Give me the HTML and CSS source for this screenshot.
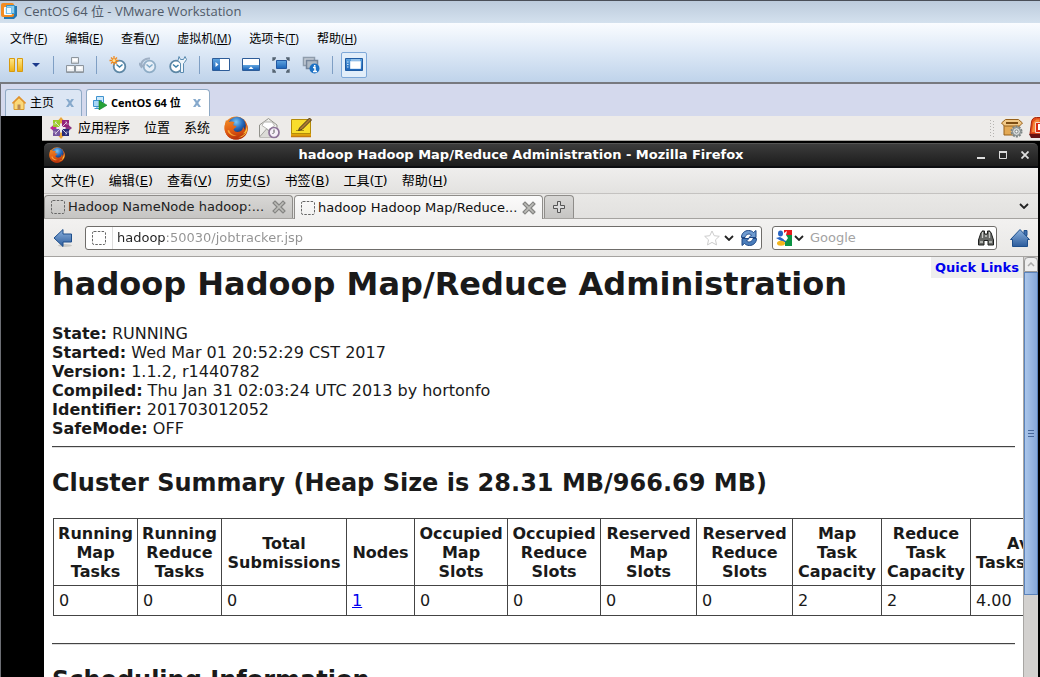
FILE: index.html
```html
<!DOCTYPE html>
<html lang="zh-CN">
<head>
<meta charset="utf-8">
<title>CentOS 64 位 - VMware Workstation</title>
<link rel="stylesheet" href="styles.css">
</head>
<body>
<svg class="defs" aria-hidden="true">
  <defs>
    <radialGradient id="globe" cx=".45" cy=".3" r=".7"><stop offset="0" stop-color="#7cc8f4"/><stop offset=".5" stop-color="#2a6fc0"/><stop offset="1" stop-color="#0d2a6b"/></radialGradient>
    <linearGradient id="fox" x1="0" y1="0" x2=".3" y2="1"><stop offset="0" stop-color="#f08a24"/><stop offset=".6" stop-color="#e05a12"/><stop offset="1" stop-color="#b8340c"/></linearGradient>
    <linearGradient id="gold" x1="0" y1="0" x2="0" y2="1"><stop offset="0" stop-color="#ffe88a"/><stop offset="1" stop-color="#eeb010"/></linearGradient>
    <linearGradient id="azure" x1="0" y1="0" x2="0" y2="1"><stop offset="0" stop-color="#5fa4e0"/><stop offset="1" stop-color="#1a63b8"/></linearGradient>
    <linearGradient id="steel" x1="0" y1="0" x2="0" y2="1"><stop offset="0" stop-color="#8cb2de"/><stop offset="1" stop-color="#2c5c9c"/></linearGradient>
    <symbol id="firefox" viewBox="0 0 24 24">
      <circle cx="12" cy="12" r="11.500" fill="url(#fox)"/>
      <circle cx="13" cy="9.500" r="8.800" fill="url(#globe)"/>
      <path d="M2 4c1 1 2 2 3.500 2 2-.8 4-.4 5 .4-1 .8-1.500 2-1 3l3 .6c-.4 2-2.500 2.200-3 3.500 1 2.500 4 3 6.500 2 2-.8 3-2.500 3-4.500 1.500 1 2 3 1.500 4.500 2-2 2.500-5 1.500-8 1.500 1.500 2 4 1.700 6.500C23 19.500 18.500 23.500 12 23.500 5 23.500 .5 18 .6 12 .7 9 1.200 6.500 2 4z" fill="url(#fox)"/>
      <path d="M22.500 9c.3 3-.8 6.500-3.500 8.500 1-.2 2-.8 2.800-1.500-1.500 3-4.500 4.800-7.800 5.200 5 .6 9-3.500 9.200-8z" fill="#fbc63c"/>
      <path d="M5 14c1 3.500 4 5.500 8 5.300-4 1.500-8.500-.8-9.500-4.800z" fill="#f8a838"/>
    </symbol>
    <symbol id="blank-page" viewBox="0 0 14 14"><rect x=".5" y=".5" width="13" height="13" rx="1.500" fill="none" stroke="#666" stroke-dasharray="2.500 1.300"/></symbol>
    <symbol id="tab-close" viewBox="0 0 14 14"><path d="M3 3l8 8M11 3l-8 8" stroke="#858583" stroke-width="4" stroke-linecap="square"/><path d="M3 3l8 8M11 3l-8 8" stroke="#bdbdb9" stroke-width="1.600" stroke-linecap="square"/></symbol>
    <symbol id="clock" viewBox="0 0 18 18"><circle cx="10.500" cy="10.500" r="5.800" fill="#fff" stroke="#5d87a5" stroke-width="1.800"/><path d="M7.500 8.500l3 2.500 3-2.500" fill="none" stroke="#3b7fa8" stroke-width="1.500"/></symbol>
    <symbol id="vm-close" viewBox="0 0 8 8"><path d="M0 0h2.500l1.500 2 1.500-2h2.500l-2.700 4 2.700 4h-2.500l-1.500-2-1.500 2h-2.500l2.700-4z" fill="#86a9cc"/></symbol>
    <symbol id="chevron" viewBox="0 0 10 6"><path d="M1 1l4 4 4-4" fill="none" stroke="#222" stroke-width="1.800"/></symbol>
  </defs>
</svg>

<header class="vm-title">
  <svg class="i16" viewBox="0 0 16 16"><path d="M3 3h13v10l-3 3h-10z" fill="#2677b0"/><rect x="0" y="0" width="13" height="14" rx="2" fill="#f28c22"/><path d="M3.500 4.500h7v7h-7z" fill="#dff1fb" stroke="#fff"/><path d="M5.500 2.500h8v8h-8z" fill="#8fcdee" stroke="#3395cc"/><path d="M5.500 4.500h5v6h-5z" fill="#eef8fd" stroke="#76bfe6"/></svg>
  <span>CentOS 64 位 - VMware Workstation</span>
</header>

<div class="vm-bars">
  <nav class="vm-menu">
    <button>文件(<u>F</u>)</button><button>编辑(<u>E</u>)</button><button>查看(<u>V</u>)</button><button>虚拟机(<u>M</u>)</button><button>选项卡(<u>T</u>)</button><button>帮助(<u>H</u>)</button>
  </nav>
  <div class="vm-tools">
    <div class="split">
      <button aria-label="暂停"><svg class="i18" viewBox="0 0 18 18"><path d="M2.500 2.500h5v13h-5zM10.500 2.500h5v13h-5z" fill="url(#gold)" stroke="#d79a10"/></svg></button>
      <button aria-label="电源选项"><svg class="caret" viewBox="0 0 10 6"><path d="M1 1h8l-4 4z" fill="#1c3a8c"/></svg></button>
    </div>
    <i class="rule"></i>
    <button aria-label="Ctrl+Alt+Del"><svg class="i18" viewBox="0 0 18 18"><g fill="#eef0f2" stroke="#8d959d"><path d="M5.500 1.500h7v6h-7zM.5 9.500h8v7h-8zM9.500 9.500h8v7h-8z"/></g><path d="M7 4h4M2.500 12h4M11.500 12h4" stroke="#fff" fill="none" stroke-width="2"/><path d="M6 7h6M1 15.500h7M10 15.500h7" stroke="#a8afb6"/></svg></button>
    <i class="rule"></i>
    <button aria-label="拍摄快照"><svg class="i18" viewBox="0 0 18 18"><use href="#clock"/><path d="M5 0v9M.5 4.500h9M2 1.500l6 6M8 1.500l-6 6" stroke="#f08a1e" stroke-width="1.300"/><circle cx="5" cy="4.500" r="1.500" fill="#ffe49a"/></svg></button>
    <button aria-label="恢复快照"><svg class="i18 dim" viewBox="0 0 18 18"><use href="#clock"/><path d="M2 10c0-5 4-8 9-7.500M0 7l2.500 4 3.500-3" fill="none" stroke="#7488a0" stroke-width="2"/></svg></button>
    <button aria-label="快照管理器"><svg class="i18" viewBox="0 0 18 18"><circle cx="7" cy="10.500" r="5.800" fill="#fff" stroke="#5d87a5" stroke-width="1.800"/><path d="M4 8.500l3 2.500 2.500-2" fill="none" stroke="#3b7fa8" stroke-width="1.500"/><path d="M10 .5l1.500 3h3l1.500-3 1.500 3-2 3-1 1v9h-3v-9l-2.500-3z" fill="#eef5fa" stroke="#5b8bb0"/></svg></button>
    <i class="rule"></i>
    <button aria-label="显示库"><svg class="i18" viewBox="0 0 18 14"><path d="M.5 .5h17v12h-17z" fill="#fff" stroke="#2d5c98"/><path d="M1 1h7v11h-7z" fill="url(#azure)"/><path d="M3.500 4l3 2.500-3 2.500z" fill="#fff"/></svg></button>
    <button aria-label="显示缩略图栏"><svg class="i18" viewBox="0 0 18 14"><path d="M.5 .5h17v12h-17z" fill="#fff" stroke="#2d5c98"/><path d="M1 7h16v5h-16z" fill="url(#azure)"/><path d="M6.500 11l2.500-2.500 2.500 2.500z" fill="#fff"/></svg></button>
    <button aria-label="全屏"><svg class="i18" viewBox="0 0 18 18"><path d="M4.500 4.500h10v8h-10z" fill="url(#azure)" stroke="#2257a0"/><path d="M1 5v-3h3M14 2h3v3M17 13v3h-3M4 16h-3v-3M1 2l2 2M17 2l-2 2M17 16l-2-2M1 16l2-2" fill="none" stroke="#536270" stroke-width="1.300"/></svg></button>
    <button aria-label="Unity"><svg class="i18" viewBox="0 0 18 18"><path d="M1.500 1.500h11v8h-11z" fill="#c5cdd6" stroke="#8f9dac" stroke-width="1.500"/><path d="M4.500 4.500h11v8h-11z" fill="#aeb9c5" stroke="#75859a" stroke-width="1.500"/><circle cx="12.500" cy="12.500" r="5" fill="#1d71c4"/><path d="M12.700 9v1.500M11 11.500h2v4M11 15.500h4" stroke="#fff" stroke-width="1.500" fill="none"/></svg></button>
    <i class="rule"></i>
    <button class="pressed" aria-label="控制台视图"><svg class="i18" viewBox="0 0 18 14"><path d="M.5 .5h17v12h-17z" fill="url(#azure)" stroke="#1f5ba2"/><path d="M5.500 3.500h10v7h-10z" fill="#fff" stroke="#d8e8f7"/><path d="M2 4h1.500M2 6.500h1.500M2 9h1.500M6 2h9" stroke="#cfe4f7"/></svg></button>
  </div>
</div>

<div class="vm-tabs" role="tablist">
  <div class="vm-tab" role="tab">
    <svg class="i14" viewBox="0 0 14 14"><path d="M2 6v7.500h10v-7.500l-5-4.500z" fill="#fbd878" stroke="#d99a2c"/><path d="M.5 7.500l6.500-6.500 6.500 6.500" fill="none" stroke="#e0922c" stroke-width="1.600"/><path d="M5.500 8.500h3v5h-3z" fill="#b98a55"/></svg>
    <span>主页</span>
    <button class="vm-x" aria-label="关闭"><svg viewBox="0 0 8 8"><use href="#vm-close"/></svg></button>
  </div>
  <div class="vm-tab current" role="tab" aria-selected="true">
    <svg class="i14" viewBox="0 0 14 14"><path d="M3.500 .5h7v6h-7z" fill="#cfe9fb" stroke="#3f93cf"/><path d="M.5 4.500h8v6h-8z" fill="#a8d6f5" stroke="#3f93cf"/><path d="M1.500 12.500h5M4 10.500v2" stroke="#3f93cf"/><path d="M6 4.500l8 4.700-8 4.700z" fill="#27a336" stroke="#12812a" stroke-width=".6"/></svg>
    <span>CentOS 64 位</span>
    <button class="vm-x" aria-label="关闭"><svg viewBox="0 0 8 8"><use href="#vm-close"/></svg></button>
  </div>
</div>

<main class="guest">
  <div class="desktop">
    <div class="panel">
      <svg class="i22" viewBox="0 0 22 22"><path d="M11 0l3 3.500-3 3.500-3-3.500z" fill="#e9a63a"/><path d="M22 11l-3.500 3-3.500-3 3.500-3z" fill="#8a3580"/><path d="M11 22l-3-3.500 3-3.500 3 3.500z" fill="#e9a63a"/><path d="M0 11l3.500-3 3.500 3-3.500 3z" fill="#c02c92"/><path d="M3 3h7v7h-7z" fill="#9ccd2a"/><path d="M12 3h7v7h-7z" fill="#932279"/><path d="M3 12h7v7h-7z" fill="#76559e"/><path d="M12 12h7v7h-7z" fill="#282b77"/><path d="M5 5l12 12M17 5l-12 12" stroke="#f5eef5" stroke-width=".8"/><path d="M6 4v3h-3M16 4v3h3M6 18v-3h-3M16 18v-3h3" stroke="#e8dff0" fill="none" stroke-width=".5"/></svg>
      <button>应用程序</button><button>位置</button><button>系统</button>
      <div class="launchers">
        <button aria-label="Firefox"><svg class="i24" viewBox="0 0 24 24"><use href="#firefox"/></svg></button>
        <button aria-label="Evolution"><svg class="i22" viewBox="0 0 22 22"><path d="M1.500 8l9-6.500 8.500 6.500v12h-17.500z" fill="#eeeeea" stroke="#92928c"/><path d="M4 8.500l2-3.500h8l2.500 3.500-6 4.500z" fill="#fff" stroke="#b5b5b0"/><path d="M1.500 20l7-8 10 8" fill="#dcdcd7" stroke="#a5a5a0"/><circle cx="16" cy="15.500" r="5" fill="#f5f0f8" stroke="#8d7399" stroke-width="1.700"/><path d="M16 12.500v3l-1.500 1.500" stroke="#555" fill="none"/></svg></button>
        <button aria-label="便笺"><svg class="i22" viewBox="0 0 22 22"><path d="M1 3h20v17h-20z" fill="#e0a40a"/><path d="M1.500 2.500h19v14h-19z" fill="#f8dd2c" stroke="#b48b08"/><path d="M1 19.500h20" stroke="#c57910" stroke-width="1.500"/><path d="M6 13.500h8" stroke="#a88c18"/><path d="M9.500 11l10-10 2 2-9.500 9.500-3.500 1z" fill="#a87932" stroke="#4c3a1c"/></svg></button>
      </div>
      <div class="tray">
        <svg class="grip" viewBox="0 0 5 17"><path d="M.5 0v17M3.500 1v16" stroke="#b5b3b0" stroke-dasharray="1 2"/></svg>
        <svg class="i22" viewBox="0 0 22 22"><path d="M3 8h15v10h-15z" fill="#e3a955" stroke="#97601a"/><path d="M3 8l2-4h12l2 4z" fill="#9c651d"/><path d="M.5 6l4-3.500h13l4 3.500-3 3h-15z" fill="#f1c886" stroke="#97601a"/><path d="M5 5h12v2h-12z" fill="#7c4c12"/><circle cx="15.500" cy="14.500" r="5" fill="#c4c9c9" stroke="#7d8585" stroke-width="2" stroke-dasharray="2 1.140"/><circle cx="15.500" cy="14.500" r="4" fill="#d5d8d8" stroke="#7d8585"/><circle cx="15.500" cy="14.500" r="1.500" fill="#fff" stroke="#7d8585"/></svg>
        <svg class="alert" viewBox="0 0 11 22"><path d="M1 17l1.500-12c.5-3 2-4.500 5-4.500h8v17z" fill="#e5501b" stroke="#a8230b"/><path d="M3 15l1.500-10 3-2.500h3v12.500z" fill="#f48a3e"/><path d="M6.500 5.500h5v10h-5z" fill="#d82b12" stroke="#f8d8c8"/><path d="M9 7h2v6h-2z" fill="#fff"/><path d="M0 17h11v4h-9z" fill="#611"/></svg>
      </div>
    </div>

    <section class="window">
      <div class="ff-title">
        <svg class="i16" viewBox="0 0 24 24"><use href="#firefox"/></svg>
        <h1>hadoop Hadoop Map/Reduce Administration - Mozilla Firefox</h1>
        <div class="controls">
          <button aria-label="最小化"><svg viewBox="0 0 8 8"><path d="M0 7h8" stroke="#ddd" stroke-width="2"/></svg></button>
          <button aria-label="最大化"><svg viewBox="0 0 8 8"><path d="M.5 1v6.500h7v-6.500" stroke="#ddd" fill="none"/><path d="M0 1h8" stroke="#ddd" stroke-width="2"/></svg></button>
          <button aria-label="关闭"><svg viewBox="0 0 8 8"><path d="M.5 .5l7 7M7.500 .5l-7 7" stroke="#ddd" stroke-width="1.800"/></svg></button>
        </div>
      </div>
      <nav class="ff-menu">
        <button>文件(<u>F</u>)</button><button>编辑(<u>E</u>)</button><button>查看(<u>V</u>)</button><button>历史(<u>S</u>)</button><button>书签(<u>B</u>)</button><button>工具(<u>T</u>)</button><button>帮助(<u>H</u>)</button>
      </nav>
      <div class="ff-tabs" role="tablist">
        <div class="ff-tab" role="tab"><svg class="i14" viewBox="0 0 14 14"><use href="#blank-page"/></svg><span>Hadoop NameNode hadoop:...</span><button aria-label="关闭标签页"><svg class="i14" viewBox="0 0 14 14"><use href="#tab-close"/></svg></button></div>
        <div class="ff-tab current" role="tab" aria-selected="true"><svg class="i14" viewBox="0 0 14 14"><use href="#blank-page"/></svg><span>hadoop Hadoop Map/Reduce...</span><button aria-label="关闭标签页"><svg class="i14" viewBox="0 0 14 14"><use href="#tab-close"/></svg></button></div>
        <button class="new-tab" aria-label="新标签页"><svg class="i12" viewBox="0 0 12 12"><path d="M4.500 .5h3v4h4v3h-4v4h-3v-4h-4v-3h4z" fill="#ddd" stroke="#555"/></svg></button>
        <button class="all-tabs" aria-label="所有标签页"><svg class="chev" viewBox="0 0 10 6"><use href="#chevron"/></svg></button>
      </div>
      <div class="ff-nav">
        <button aria-label="后退"><svg class="i20" viewBox="0 0 20 20"><ellipse cx="12" cy="17.500" rx="7" ry="1.500" fill="#c9c9c6"/><path d="M1 10l9-8.500v4.500h8.500v8h-8.500v4.500z" fill="url(#steel)" stroke="#1e4f8c"/></svg></button>
        <div class="field address">
          <svg class="i14" viewBox="0 0 14 14"><use href="#blank-page"/></svg>
          <input type="text" value="hadoop:50030/jobtracker.jsp" aria-label="地址">
          <svg class="i16" viewBox="0 0 16 16"><path d="M8 1l2.200 4.700 5.100.6-3.800 3.500 1 5.100-4.500-2.500-4.500 2.500 1-5.100-3.800-3.500 5.100-.6z" fill="#fff" stroke="#ccc"/></svg>
          <svg class="chev" viewBox="0 0 10 6"><use href="#chevron"/></svg>
          <svg class="i16 reload" viewBox="0 0 16 16"><path id="arc" d="M.5 7.500c0-4.500 3.500-7 7-7 2.500 0 4 1 5 2l2.500-2v7h-7l2.500-2.500c-2.500-2-6-.5-6.500 2.500z" fill="#6f9bd0" stroke="#1d4684"/><path d="M15.500 8.500c0 4.500-3.500 7-7 7-2.500 0-4-1-5-2l-2.500 2v-7h7l-2.500 2.500c2.500 2 6 .5 6.500-2.500z" fill="#4a7dbb" stroke="#1d4684"/></svg>
        </div>
        <div class="field search">
          <svg class="i16" viewBox="0 0 16 16"><path d="M0 0h8v16h-8z" fill="#fff"/><path d="M8 0h8v6h-8z" fill="#e5191c"/><path d="M9 5h7v11h-7z" fill="#0b9344"/><ellipse cx="4.500" cy="3.500" rx="2.500" ry="3" fill="#2865c4"/><path d="M0 8l4-1 5 3 1 2h-3z" fill="#2865c4"/><ellipse cx="5" cy="13.300" rx="4" ry="2.500" fill="#f3b51c"/><path d="M8 3l3-2-1 4 2 3-2 3-2-1-1-3z" fill="#fff"/></svg>
          <svg class="chev" viewBox="0 0 10 6"><use href="#chevron"/></svg>
          <input type="text" placeholder="Google" aria-label="搜索">
          <svg class="i16" viewBox="0 0 16 16"><path d="M3 2.500h1v-1.500h2.500v3h3v-3h2.500v1.500h1l2.500 7.500v5h-5.500v-4.500h-4v4.500h-5.500v-5z" fill="#666865" stroke="#1f201f"/><path d="M4.500 2v6M11.500 2v6M2 12h3M11 12h3M7 6h2" stroke="#c8cac6" stroke-width="1.300"/></svg>
        </div>
        <button class="home" aria-label="主页"><svg class="i20" viewBox="0 0 20 20"><path d="M14 2.500h3v5h-3z" fill="#3e6fae" stroke="#1e4f8c"/><path d="M2.500 18.500v-7h-2l9.500-10 9.500 10h-2v7z" fill="url(#steel)" stroke="#1e4f8c"/></svg></button>
      </div>

      <div class="viewport">
        <article class="page">
          <a class="quick" href="#quicklinks">Quick Links</a>
          <h1>hadoop Hadoop Map/Reduce Administration</h1>
          <p><b>State:</b> RUNNING<br><b>Started:</b> Wed Mar 01 20:52:29 CST 2017<br><b>Version:</b> 1.1.2, r1440782<br><b>Compiled:</b> Thu Jan 31 02:03:24 UTC 2013 by hortonfo<br><b>Identifier:</b> 201703012052<br><b>SafeMode:</b> OFF</p>
          <hr>
          <h2>Cluster Summary (Heap Size is 28.31 MB/966.69 MB)</h2>
          <table>
            <colgroup><col class="c-run" span="2"><col class="c-total"><col class="c-nodes"><col class="c-occupied" span="2"><col class="c-reserved" span="2"><col class="c-capacity" span="2"><col class="c-avg"></colgroup>
            <thead><tr><th>Running<br>Map<br>Tasks</th><th>Running<br>Reduce<br>Tasks</th><th>Total<br>Submissions</th><th>Nodes</th><th>Occupied<br>Map<br>Slots</th><th>Occupied<br>Reduce<br>Slots</th><th>Reserved<br>Map<br>Slots</th><th>Reserved<br>Reduce<br>Slots</th><th>Map<br>Task<br>Capacity</th><th>Reduce<br>Task<br>Capacity</th><th>Avg.<br>Tasks/Node</th></tr></thead>
            <tbody><tr><td>0</td><td>0</td><td>0</td><td><a href="#nodes">1</a></td><td>0</td><td>0</td><td>0</td><td>0</td><td>2</td><td>2</td><td>4.00</td></tr></tbody>
          </table>
          <hr class="spaced">
          <h2>Scheduling Information</h2>
        </article>
        <div class="scroll" aria-hidden="true">
          <div class="scroll-up"><svg viewBox="0 0 8 5"><path d="M1 4l3-3 3 3" fill="none" stroke="#aaa" stroke-width="1.500"/></svg></div>
          <div class="thumb"><i></i></div>
        </div>
      </div>
    </section>
  </div>
</main>
</body>
</html>
```

FILE: styles.css
```css
* { box-sizing: border-box; }
body {
  margin: 0;
  height: 100vh;
  overflow: hidden;
  display: flex;
  flex-direction: column;
  background: #000;
  color: #000;
  font: 12px/16px "Open Sans", "Noto Sans CJK SC", sans-serif;
}
button {
  border: 0;
  padding: 0;
  background: none;
  color: inherit;
  font: inherit;
  white-space: nowrap;
}
svg { display: block; flex: none; }
.defs { position: absolute; width: 0; height: 0; }
.i12 { width: 12px; height: 12px; }
.i14 { width: 14px; height: 14px; }
.i16 { width: 16px; height: 16px; }
.i18 { width: 18px; height: 18px; }
.i20 { width: 20px; height: 20px; }
.i22 { width: 22px; height: 22px; }
.i24 { width: 24px; height: 24px; }
.dim { opacity: .55; }
.chev { width: 10px; height: 6px; }
.caret { width: 10px; height: 6px; }

/* Host window */
.vm-title {
  flex: none;
  display: flex;
  align-items: center;
  gap: 7px;
  height: 23px;
  padding: 0 0 2px 1px;
  border-top: 1px solid #4a4f58;
  background: linear-gradient(#bccbdc, #d4e1ee);
  color: #505a68;
  font-size: 13px;
}
.vm-bars {
  flex: none;
  height: 61px;
  border-bottom: 2px solid #77797f;
  background: linear-gradient(#fafcff, #dfeaf7 45%, #bfd3ea);
}
.vm-menu {
  display: flex;
  gap: 18px;
  padding: 8px 10px 0;
}
.vm-tools {
  display: flex;
  align-items: center;
  gap: 12px;
  height: 26px;
  margin-top: 5px;
  padding-left: 7px;
}
.split { display: flex; align-items: center; gap: 6px; }
.rule { width: 1px; height: 18px; background: #7f9fc4; }
.pressed {
  display: grid;
  place-items: center;
  width: 26px;
  height: 26px;
  margin-left: -4px;
  border: 1px solid #7ea8d8;
  border-radius: 2px;
  background: #e2eefa;
}
.vm-tabs {
  flex: none;
  display: flex;
  align-items: flex-end;
  gap: 4px;
  height: 32px;
  padding-left: 4px;
  border-left: 1px solid #6c6e74;
  background: #d4d9ed;
}
.vm-tab {
  display: flex;
  align-items: center;
  gap: 4px;
  height: 27px;
  padding: 0 7px 0 6px;
  border: 1px solid #8fa9c4;
  border-bottom: 0;
  border-radius: 3px 4px 0 0;
  background: #dce6f4;
}
.vm-tab.current { padding-right: 8px; background: #fff; font-weight: bold; font-size: 11px; }
.vm-x { margin-left: 8px; }
.vm-x svg { width: 8px; height: 8px; }

/* Guest desktop */
.guest {
  flex: 1;
  min-height: 0;
  display: flex;
  padding-left: 42px;
  border-left: 1px solid #6c6e74;
  background: #000;
}
.desktop {
  flex: 1;
  min-width: 0;
  display: flex;
  flex-direction: column;
  margin-left: -1px;
}
.panel {
  flex: none;
  display: flex;
  align-items: center;
  gap: 14px;
  height: 25px;
  padding-left: 8px;
  border-bottom: 1px solid #a9a7a3;
  background: #edebe9;
  font: 13px/16px "DejaVu Sans", "Noto Sans CJK SC", sans-serif;
}
.panel > svg { margin-right: -8px; }
.launchers { display: flex; align-items: center; gap: 10px; }
.tray { display: flex; align-items: center; gap: 6px; margin-left: auto; }
.grip { width: 5px; height: 17px; }
.alert { width: 11px; height: 22px; }
.window {
  flex: 1;
  min-height: 0;
  display: flex;
  flex-direction: column;
  margin: 2px 2px 0;
  font: 13px/16px "DejaVu Sans", "Noto Sans CJK SC", sans-serif;
}
.ff-title {
  flex: none;
  display: flex;
  align-items: center;
  height: 25px;
  padding: 0 9px 0 5px;
  border-top: 1px solid #555;
  border-bottom: 2px solid #0c0d10;
  border-radius: 5px 5px 0 0;
  background: linear-gradient(#3c3c3c, #1c1c1c);
  color: #fff;
}
.ff-title h1 {
  flex: 1;
  margin: 0;
  font-size: 13px;
  line-height: 16px;
  text-align: center;
}
.controls { display: flex; gap: 14px; }
.controls svg { width: 8px; height: 8px; }
.ff-menu {
  flex: none;
  display: flex;
  align-items: center;
  gap: 14px;
  height: 26px;
  padding: 0 7px;
  border-bottom: 1px solid #c4c2c0;
  background: linear-gradient(#efeeed, #e3e2e0);
}
.ff-tabs {
  flex: none;
  display: flex;
  align-items: flex-end;
  gap: 1px;
  height: 25px;
  border-bottom: 1px solid #a5a3a0;
  background: linear-gradient(#e9e8e6, #e2e1df);
}
.ff-tab {
  flex: 0 1 249px;
  display: flex;
  align-items: center;
  gap: 3px;
  height: 23px;
  padding: 0 6px;
  border: 1px solid #8f8d8a;
  border-bottom: 0;
  border-radius: 4px 4px 0 0;
  background: linear-gradient(#d8d7d5, #c6c5c3);
  color: #222;
  white-space: nowrap;
}
.ff-tab span { flex: 1; }
.ff-tab.current {
  height: 24px;
  margin-bottom: -1px;
  background: linear-gradient(#fbfbfb, #f1f0ef);
  color: #111;
}
.new-tab {
  display: grid;
  place-items: center;
  width: 30px;
  height: 23px;
  border: 1px solid #8f8d8a;
  border-bottom: 0;
  border-radius: 4px 4px 0 0;
  background: linear-gradient(#d8d7d5, #c6c5c3);
}
.all-tabs { align-self: center; margin: 0 9px 0 auto; }
.ff-nav {
  flex: none;
  display: flex;
  align-items: center;
  gap: 10px;
  height: 38px;
  padding: 0 8px 0 9px;
  border-bottom: 1px solid #a5a3a0;
  background: linear-gradient(#f2f1f0, #e9e8e6);
}
.field {
  display: flex;
  align-items: center;
  height: 24px;
  border: 1px solid #6f6d6a;
  border-radius: 3px;
  background: #fff;
}
.field input {
  flex: 1;
  min-width: 0;
  height: 22px;
  padding: 0;
  border: 0;
  outline: 0;
  background: none;
  font: inherit;
}
.field input::placeholder { color: #a3a3a3; opacity: 1; }
.address { flex: 1; gap: 4px; margin-left: 2px; padding: 0 4px 0 6px; }
.address input {
  margin-left: 2px;
  padding-left: 4px;
  border-left: 1px solid #ddd;
  background: linear-gradient(90deg, #222 53px, #929292 53px);
  background-clip: text;
  -webkit-background-clip: text;
  -webkit-text-fill-color: transparent;
}
.reload { margin-left: 3px; }
.search { width: 225px; gap: 2px; padding: 0 2px 0 3px; }
.search input { margin-left: 4px; }
.home { margin-left: 3px; }

/* Web page */
.viewport { flex: 1; min-height: 0; display: flex; background: #fff; }
.page {
  position: relative;
  flex: 1;
  min-width: 0;
  overflow: hidden;
  padding: 8px;
  color: #1a1a1a;
  font-size: 16px;
  line-height: 19px;
  white-space: nowrap;
}
.page h1 { margin: 0 0 21px; font-size: 32px; line-height: 38px; }
.page p { margin: 0 0 8px; }
.page hr {
  height: 2px;
  margin: 0 0 20px;
  border: 0;
  border-top: 1px solid #444;
  border-bottom: 1px solid #ddd;
}
.page hr.spaced { margin-top: 27px; }
.page h2 { margin: 0 0 20px; font-size: 24px; line-height: 30px; }
.page a { color: #00e; }
.page .quick {
  position: absolute;
  top: 0;
  right: 0;
  padding: 1px 4px;
  background: #eee;
  font-size: 13px;
  font-weight: bold;
  text-decoration: none;
}
table { width: 1031px; margin-left: 1px; table-layout: fixed; border-collapse: collapse; }
th, td { padding: 5px; border: 1px solid #444; text-align: left; }
th { padding: 5px 2px 4px; text-align: center; }
.c-run { width: 84px; }
.c-total { width: 125px; }
.c-nodes { width: 68px; }
.c-occupied { width: 93px; }
.c-reserved { width: 96px; }
.c-capacity { width: 89px; }
.c-avg { width: 113px; }
.scroll {
  flex: none;
  display: flex;
  flex-direction: column;
  width: 15px;
  border-left: 1px solid #a8a6a3;
  background: #d3d1cf;
}
.scroll-up {
  display: grid;
  place-items: center;
  height: 15px;
  border: 1px solid #999;
  border-radius: 4px 4px 0 0;
  background: #eee;
}
.scroll-up svg { width: 8px; height: 5px; }
.thumb {
  display: grid;
  place-items: center;
  height: 77%;
  border: 1px solid #5b83bb;
  background: linear-gradient(90deg, #abc6ea, #86a8da);
}
.thumb i {
  width: 6px;
  height: 7px;
  background: repeating-linear-gradient(#47689b 0 1px, transparent 1px 3px);
}
```
